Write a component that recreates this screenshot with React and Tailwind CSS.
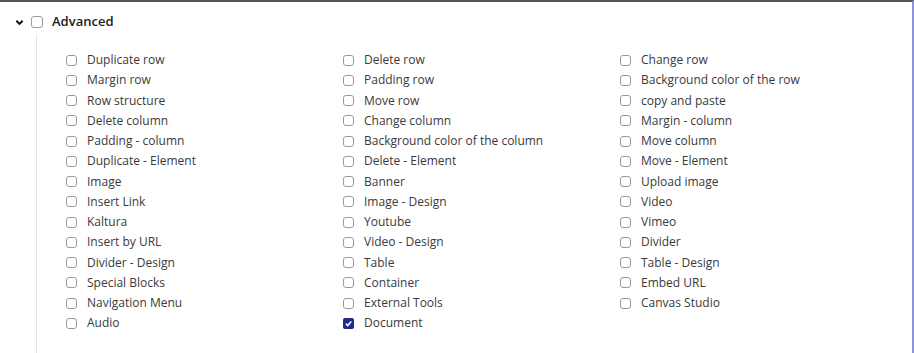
import React from "react";

const columns = [
  [
    "Duplicate row",
    "Margin row",
    "Row structure",
    "Delete column",
    "Padding - column",
    "Duplicate - Element",
    "Image",
    "Insert Link",
    "Kaltura",
    "Insert by URL",
    "Divider - Design",
    "Special Blocks",
    "Navigation Menu",
    "Audio",
  ],
  [
    "Delete row",
    "Padding row",
    "Move row",
    "Change column",
    "Background color of the column",
    "Delete - Element",
    "Banner",
    "Image - Design",
    "Youtube",
    "Video - Design",
    "Table",
    "Container",
    "External Tools",
    "Document",
  ],
  [
    "Change row",
    "Background color of the row",
    "copy and paste",
    "Margin - column",
    "Move column",
    "Move - Element",
    "Upload image",
    "Video",
    "Vimeo",
    "Divider",
    "Table - Design",
    "Embed URL",
    "Canvas Studio",
  ],
];

const checked = new Set(["Document"]);

const Box = ({ on }) =>
  on ? (
    <span className="flex h-[11px] w-[11px] items-center justify-center rounded-[2px] bg-[#1f2a8a]">
      <svg viewBox="0 0 10 10" className="h-[9px] w-[9px]">
        <path d="M2 5.2 L4.2 7.3 L8 2.8" fill="none" stroke="#fff" strokeWidth="1.8" />
      </svg>
    </span>
  ) : (
    <span className="h-[11px] w-[11px] rounded-[3px] border border-[#9a9a9a] bg-white" />
  );

export default function App() {
  return (
    <div
      className="h-[353px] w-[914px] border-t-2 border-r-2 border-t-[#555] border-r-[#8f93dc] bg-white text-[#3a3a3a]"
      style={{ fontFamily: '"Open Sans", sans-serif' }}
    >
      <div className="flex h-[33px] items-center pl-[15px] pt-[7px]">
        <svg viewBox="0 0 10 10" className="h-[9px] w-[9px]">
          <path d="M1.5 3 L5 6.5 L8.5 3" fill="none" stroke="#111" strokeWidth="2.2" />
        </svg>
        <span className="ml-[7px] h-[12px] w-[12px] rounded-[3px] border border-[#9a9a9a]" />
        <span className="ml-[9px] text-[13px] font-semibold text-[#222]">Advanced</span>
      </div>
      <div className="ml-[36px] h-[318px] border-l border-[#e2e2e2] pl-[29px] pt-[15px]">
        <div className="grid grid-cols-[277px_277px_277px]">
          {columns.map((col, ci) => (
            <div key={ci} className="flex flex-col">
              {col.map((item) => (
                <label key={item} className="flex h-[20.25px] items-center">
                  <Box on={checked.has(item)} />
                  <span className="ml-[10px] text-[12px] leading-none">{item}</span>
                </label>
              ))}
            </div>
          ))}
        </div>
      </div>
    </div>
  );
}
